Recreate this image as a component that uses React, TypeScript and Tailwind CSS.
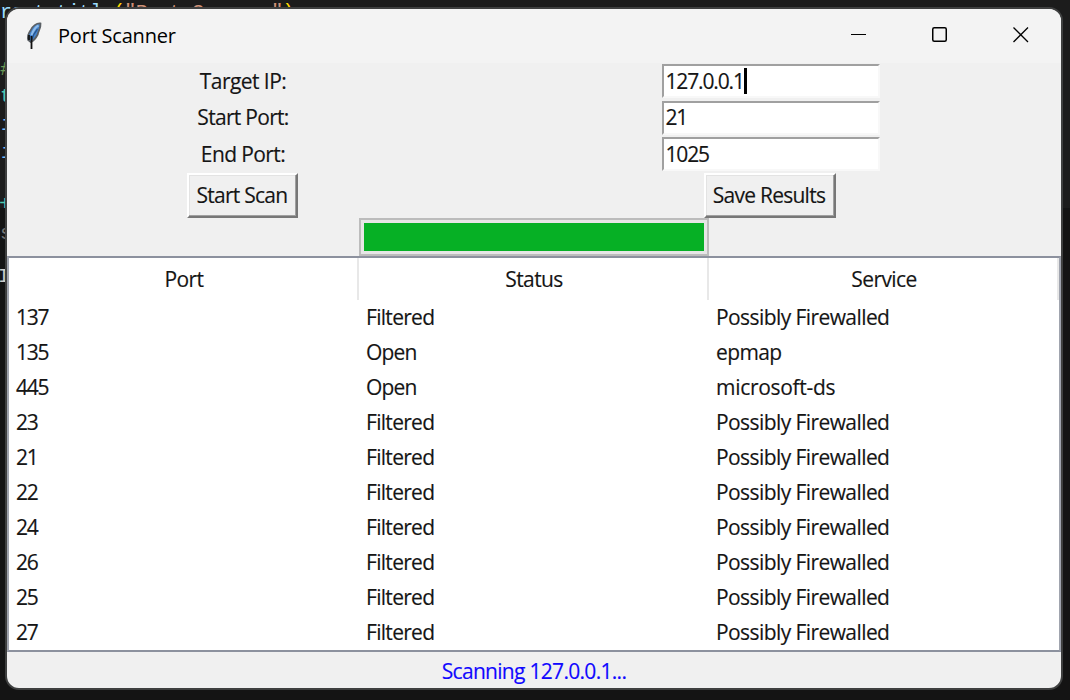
import React from 'react';

const rows: [string, string, string][] = [
  ['137', 'Filtered', 'Possibly Firewalled'],
  ['135', 'Open', 'epmap'],
  ['445', 'Open', 'microsoft-ds'],
  ['23', 'Filtered', 'Possibly Firewalled'],
  ['21', 'Filtered', 'Possibly Firewalled'],
  ['22', 'Filtered', 'Possibly Firewalled'],
  ['24', 'Filtered', 'Possibly Firewalled'],
  ['26', 'Filtered', 'Possibly Firewalled'],
  ['25', 'Filtered', 'Possibly Firewalled'],
  ['27', 'Filtered', 'Possibly Firewalled'],
];

const tracking: Record<string, string> = {
  Filtered: 'tracking-[-0.7px]',
  Open: 'tracking-[-0.8px]',
  epmap: 'tracking-[-0.6px]',
  'microsoft-ds': 'tracking-[-0.3px]',
  'Possibly Firewalled': 'tracking-[-0.58px]',
};

function Feather() {
  return (
    <svg width="16" height="29" viewBox="0 0 16 29" className="block">
      <path d="M14.500 1.500C10.500 1 6.500 4 4.500 8.500 2.500 11 1.500 15 2.200 18l2.500 2c3.500-1.500 5.500-4.500 7-7.500.5-3.500 3.300-6.500 2.800-11Z" fill="#4384cf" stroke="#5b6065" strokeWidth="1.800" />
      <path d="M12.500 3.500C9.500 5 7 9 5.500 13" stroke="#8fbcea" strokeWidth="2" fill="none" />
      <path d="M11.500 7C9 10 6.500 15 5.800 18" stroke="#28558c" strokeWidth="1.200" fill="none" />
      <path d="M3 13v5M5.500 14v13" stroke="#111" strokeWidth="1.800" fill="none" />
    </svg>
  );
}

function Editor() {
  return (
    <div className="absolute inset-0 overflow-hidden whitespace-pre font-['Liberation_Mono',monospace] text-[20px] leading-[24px] tracking-[-0.7px]">
      <div className="absolute left-0 top-px text-[#9cdcfe]">
        root.title<span className="text-[#ffd700]">(</span>
        <span className="text-[#ce9178]">"Port Scanner"</span>
        <span className="text-[#ffd700]">)</span>
      </div>
      <div className="absolute left-0 top-[58px] text-[#6a9955]">#</div>
      <div className="absolute left-0 top-[85px] text-[#4ec9b0]">t</div>
      <div className="absolute left-px top-[113px] text-[#75beff]">i</div>
      <div className="absolute left-px top-[141px] text-[#75beff]">i</div>
      <div className="absolute left-[-1px] top-[193px] text-[#4ec9b0]">+</div>
      <div className="absolute left-0 top-[208px] h-[492px] w-full bg-[#141414]" />
      <div className="absolute left-0 top-[222px] text-[#777]">s</div>
      <div className="absolute left-[-2px] top-[265px] text-[#ccc]">I</div>
    </div>
  );
}

function Field({ value, caret }: { value: string; caret?: boolean }) {
  return (
    <div className="ml-px flex h-[34px] w-[218px] items-center border-2 border-b-[#f8f8f8] border-l-[#a0a0a0] border-r-[#f8f8f8] border-t-[#a0a0a0] bg-white pb-px pl-[2px]">
      <span className="tracking-[-1.15px]">{value}</span>
      {caret && <span className="h-[26px] w-[3px] bg-black" />}
    </div>
  );
}

function Button({ label, width }: { label: string; width: string }) {
  return (
    <div className={`${width} -ml-px flex h-[45px] items-center justify-center border-2 border-b-[#777] border-l-white border-r-[#777] border-t-white bg-[#f0f0f0] pr-px tracking-[-0.75px] shadow-[inset_-1px_-1px_0_#a0a0a0,inset_1px_1px_0_#e3e3e3]`}>
      {label}
    </div>
  );
}

export default function App() {
  return (
    <div className="relative h-[700px] w-[1070px] overflow-hidden bg-[#1c1c1c] pl-[5px] pt-[7px]">
      <Editor />
      <div className="relative flex h-[683px] w-[1058px] flex-col overflow-hidden whitespace-nowrap rounded-[14px] border-2 border-[#3f4040] bg-[#f0f0f0] font-['Open_Sans',sans-serif] text-[21px] leading-[28px] tracking-[-0.7px] text-[#151515] [-webkit-text-stroke:0.15px]">
        <div className="flex h-[54px] shrink-0 items-center bg-[#f3f3f3] pl-[19px] [-webkit-text-stroke:0]">
          <Feather />
          <span className="ml-4 text-[20px] tracking-[-0.2px] text-black">Port Scanner</span>
          <div className="ml-auto flex items-center gap-[65px] pb-[3px] pr-[32px]">
            <svg width="16" height="16"><path d="M0 7.500h15" stroke="#000" /></svg>
            <svg width="16" height="16" fill="none"><rect x="0.750" y="0.750" width="13.500" height="13.500" rx="1.500" stroke="#000" strokeWidth="1.500" /></svg>
            <svg width="16" height="16"><path d="m.5.5 14.500 14.500m0-14.500-14.500 14.500" stroke="#000" strokeWidth="1.300" /></svg>
          </div>
        </div>

        <div className="grid h-[155px] shrink-0 grid-cols-[472px_582px] grid-rows-[36px_37px_36px_46px] items-center justify-items-center">
          <span className="pb-px tracking-[-0.55px]">Target IP:</span>
          <Field value="127.0.0.1" caret />
          <span className="pb-px">Start Port:</span>
          <Field value="21" />
          <span className="pb-px tracking-[-0.6px]">End Port:</span>
          <Field value="1025" />
          <Button label="Start Scan" width="w-[111px]" />
          <Button label="Save Results" width="w-[132px]" />
        </div>

        <div className="ml-[352px] h-[38px] w-[350px] shrink-0 border-2 border-[#bcbcbc] bg-[#e6e6e6] px-[3px] pt-[3px]">
          <div className="h-[28px] w-[340px] bg-[#06b025]" />
        </div>

        <div className="h-[396px] shrink-0 border-2 border-[#8c919e] border-x-[#a0a4ae] bg-white">
          <div className="grid h-[42px] grid-cols-[350px_350px_350px] items-center">
            {['Port', 'Status', 'Service'].map((h) => (
              <div key={h} className="flex h-full items-center justify-center border-r-2 border-[#e8e8e8] pl-0.5 tracking-[-0.6px]">{h}</div>
            ))}
          </div>
          {rows.map((r) => (
            <div key={r[0]} className="grid h-[35px] grid-cols-[350px_350px_350px] items-center pb-px">
              {r.map((c, i) => (
                <span key={i} className={`pl-[7px] ${tracking[c] ?? 'tracking-[-1.3px]'}`}>{c}</span>
              ))}
            </div>
          ))}
        </div>

        <div className="flex h-[36px] shrink-0 items-center justify-center pt-px text-[#1008ff]">Scanning 127.0.0.1...</div>
      </div>
    </div>
  );
}
